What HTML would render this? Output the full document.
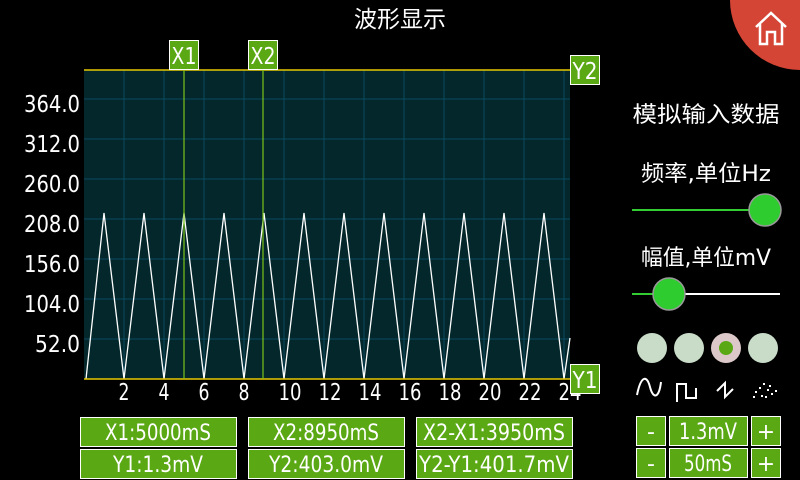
<!DOCTYPE html>
<html><head><meta charset="utf-8"><style>
html,body{margin:0;padding:0;background:#000;width:800px;height:480px;overflow:hidden}
svg{display:block}
text{font-family:"DejaVu Sans","Noto Sans CJK SC",sans-serif;fill:#fff}
</style></head><body>
<svg width="800" height="480" viewBox="0 0 800 480" xmlns="http://www.w3.org/2000/svg">
<rect width="800" height="480" fill="#000"/>
<text x="400" y="27" font-size="23" text-anchor="middle" font-family="Noto Sans CJK SC,sans-serif">波形显示</text>
<circle cx="800" cy="0" r="70" fill="#d54536"/>
<path d="M756 27 L771 13 L786 27 M760 24 V44 H767 V32 H775 V44 H782 V24" fill="none" stroke="#fff" stroke-width="2.5" stroke-linejoin="miter"/>
<rect x="84" y="70" width="486" height="309" fill="#03272a"/>
<g stroke="#0b4a63" stroke-width="1">
<path d="M124 70V379M164 70V379M204 70V379M244 70V379M284 70V379M324 70V379M364 70V379M404 70V379M444 70V379M484 70V379M524 70V379M564 70V379"/>
<path d="M84 99H570M84 139H570M84 179H570M84 219H570M84 259H570M84 299H570M84 339H570"/>
</g>
<polyline fill="none" stroke="#fff" stroke-width="1.3" points="86,379 104,213 124,379 144,213 164,379 184,213 204,379 224,213 244,379 264,213 284,379 304,213 324,379 344,213 364,379 384,213 404,379 424,213 444,379 464,213 484,379 504,213 524,379 544,213 564,379 570,338"/>
<line x1="84" y1="70" x2="570" y2="70" stroke="#e8c800" stroke-width="1.5"/>
<line x1="84" y1="379" x2="570" y2="379" stroke="#e8c800" stroke-width="1.5"/>
<line x1="184" y1="70" x2="184" y2="379" stroke="#7ac31a" stroke-width="1.2"/>
<line x1="263" y1="70" x2="263" y2="379" stroke="#7ac31a" stroke-width="1.2"/>
<g font-size="23" text-anchor="end" lengthAdjust="spacingAndGlyphs">
<text x="80" y="112" textLength="56" lengthAdjust="spacingAndGlyphs">364.0</text><text x="80" y="152" textLength="56" lengthAdjust="spacingAndGlyphs">312.0</text><text x="80" y="192" textLength="56" lengthAdjust="spacingAndGlyphs">260.0</text><text x="80" y="232" textLength="56" lengthAdjust="spacingAndGlyphs">208.0</text><text x="80" y="272" textLength="56" lengthAdjust="spacingAndGlyphs">156.0</text><text x="80" y="312" textLength="56" lengthAdjust="spacingAndGlyphs">104.0</text><text x="80" y="352" textLength="45" lengthAdjust="spacingAndGlyphs">52.0</text>
</g>
<g font-size="23" text-anchor="middle">
<text x="124" y="400" textLength="11" lengthAdjust="spacingAndGlyphs">2</text><text x="164" y="400" textLength="11" lengthAdjust="spacingAndGlyphs">4</text><text x="204" y="400" textLength="11" lengthAdjust="spacingAndGlyphs">6</text><text x="244" y="400" textLength="11" lengthAdjust="spacingAndGlyphs">8</text><text x="290" y="400" textLength="23" lengthAdjust="spacingAndGlyphs">10</text><text x="330" y="400" textLength="23" lengthAdjust="spacingAndGlyphs">12</text><text x="370" y="400" textLength="23" lengthAdjust="spacingAndGlyphs">14</text><text x="410" y="400" textLength="23" lengthAdjust="spacingAndGlyphs">16</text><text x="450" y="400" textLength="23" lengthAdjust="spacingAndGlyphs">18</text><text x="490" y="400" textLength="23" lengthAdjust="spacingAndGlyphs">20</text><text x="530" y="400" textLength="23" lengthAdjust="spacingAndGlyphs">22</text><text x="570" y="400" textLength="23" lengthAdjust="spacingAndGlyphs">24</text>
</g>
<g stroke="#fff" stroke-width="1" fill="#5aa814">
<rect x="169.5" y="40.5" width="29" height="29"/><rect x="248.5" y="40.5" width="29" height="29"/>
<rect x="570.5" y="55.5" width="29" height="29"/><rect x="570.5" y="364.5" width="29" height="29"/>
</g>
<g font-size="23" text-anchor="middle">
<text x="184" y="64" textLength="25" lengthAdjust="spacingAndGlyphs">X1</text><text x="263" y="64" textLength="25" lengthAdjust="spacingAndGlyphs">X2</text><text x="585" y="79" textLength="25" lengthAdjust="spacingAndGlyphs">Y2</text><text x="585" y="388" textLength="25" lengthAdjust="spacingAndGlyphs">Y1</text>
</g>
<g stroke="#fff" stroke-width="1" fill="#5aa814">
<rect x="80.5" y="417.5" width="156" height="29"/><rect x="248.5" y="417.5" width="156" height="29"/><rect x="416.5" y="417.5" width="156" height="29"/>
<rect x="80.5" y="449.5" width="156" height="29"/><rect x="248.5" y="449.5" width="156" height="29"/><rect x="416.5" y="449.5" width="156" height="29"/>
<rect x="636.5" y="416.5" width="29" height="29"/><rect x="669.5" y="416.5" width="78" height="29"/><rect x="751.5" y="416.5" width="29" height="29"/>
<rect x="636.5" y="448.5" width="29" height="29"/><rect x="669.5" y="448.5" width="78" height="29"/><rect x="751.5" y="448.5" width="29" height="29"/>
</g>
<g font-size="22" text-anchor="middle">
<text x="158" y="440" textLength="106" lengthAdjust="spacingAndGlyphs">X1:5000mS</text>
<text x="326" y="440" textLength="106" lengthAdjust="spacingAndGlyphs">X2:8950mS</text>
<text x="494" y="440" textLength="142" lengthAdjust="spacingAndGlyphs">X2-X1:3950mS</text>
<text x="158" y="472" textLength="90" lengthAdjust="spacingAndGlyphs">Y1:1.3mV</text>
<text x="326" y="472" textLength="114" lengthAdjust="spacingAndGlyphs">Y2:403.0mV</text>
<text x="494" y="472" textLength="150" lengthAdjust="spacingAndGlyphs">Y2-Y1:401.7mV</text>
<text x="651" y="439">-</text><text x="708" y="439" textLength="58" lengthAdjust="spacingAndGlyphs">1.3mV</text><text x="766" y="439">+</text>
<text x="651" y="471">-</text><text x="708" y="471" textLength="48" lengthAdjust="spacingAndGlyphs">50mS</text><text x="766" y="471">+</text>
</g>
<g font-family="Noto Sans CJK SC,sans-serif" text-anchor="middle" font-size="22">
<text x="706" y="122" textLength="147" lengthAdjust="spacingAndGlyphs">模拟输入数据</text>
<text x="706" y="181" textLength="130" lengthAdjust="spacingAndGlyphs">频率,单位Hz</text>
<text x="706" y="265" textLength="130" lengthAdjust="spacingAndGlyphs">幅值,单位mV</text>
</g>
<line x1="632" y1="210" x2="765" y2="210" stroke="#33cc33" stroke-width="2"/>
<circle cx="765" cy="210" r="16" fill="#2ecc2e" stroke="#999" stroke-width="1.5"/>
<line x1="632" y1="294" x2="669" y2="294" stroke="#33cc33" stroke-width="2"/>
<line x1="669" y1="294" x2="780" y2="294" stroke="#fff" stroke-width="2"/>
<circle cx="669" cy="294" r="16" fill="#2ecc2e" stroke="#999" stroke-width="1.5"/>
<circle cx="652" cy="348" r="15" fill="#c8dcc8"/><circle cx="689" cy="348" r="15" fill="#c8dcc8"/>
<circle cx="726" cy="348" r="15" fill="#dcc8c8"/><circle cx="726" cy="348" r="7" fill="#5aa814"/>
<circle cx="763" cy="348" r="15" fill="#c8dcc8"/>
<g fill="none" stroke="#fff" stroke-width="2">
<path d="M637 395 C641 375 647 375 650 387 C653 399 659 399 661 382"/>
<path d="M677 402 V384 H686 V398 H696 V388"/>
<path d="M717 391 L725 383 V397 L733 389"/>
</g>
<g fill="#fff">
<rect x="763" y="383" width="2" height="2"/><rect x="759" y="387" width="2" height="2"/><rect x="755" y="391" width="2" height="2"/><rect x="767" y="389" width="2" height="2"/><rect x="771" y="393" width="2" height="2"/><rect x="753" y="396" width="2" height="2"/><rect x="765" y="396" width="2" height="2"/><rect x="775" y="390" width="2" height="2"/><rect x="761" y="395" width="2" height="2"/><rect x="769" y="385" width="2" height="2"/>
</g>
</svg>
</body></html>
